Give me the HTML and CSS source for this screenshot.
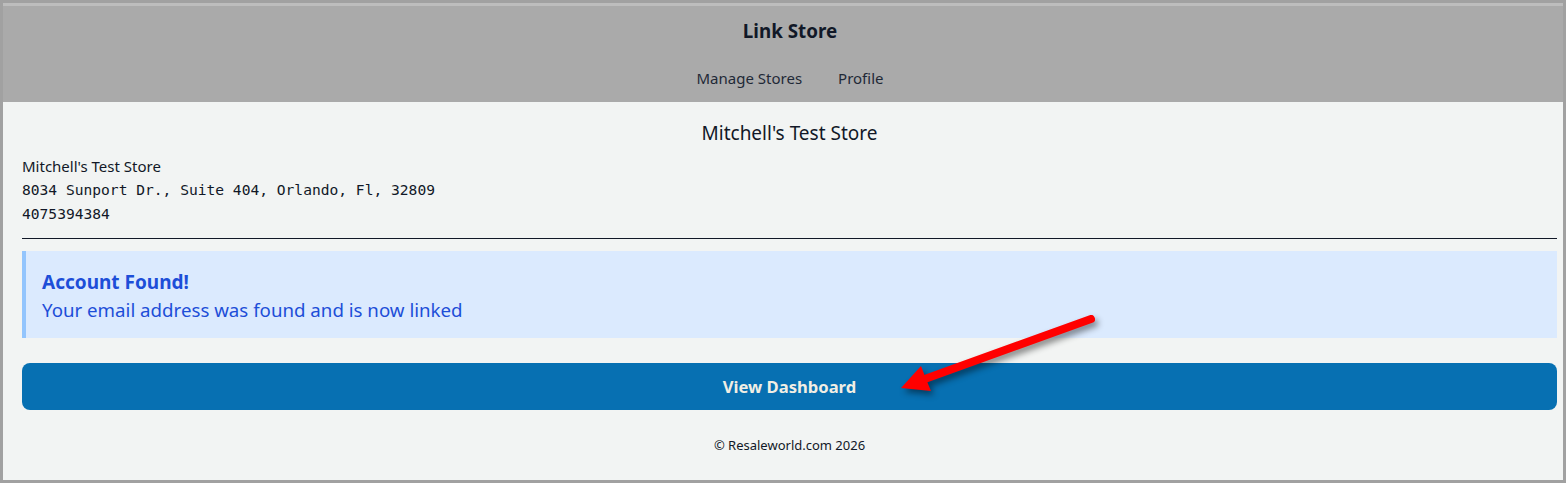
FILE: index.html
```html
<!DOCTYPE html>
<html lang="en">
<head>
  <meta charset="UTF-8">
  <meta name="viewport" content="width=device-width, initial-scale=1.0">
  <title>Link Store</title>
  <link rel="stylesheet" href="styles.css">
</head>
<body>

  <div class="frame">
    <header class="topbar">
      <div class="brand">Link Store</div>
      <nav class="nav">
        <a href="#none" class="nav-link">Manage Stores</a>
        <a href="#none" class="nav-link">Profile</a>
      </nav>
    </header>

    <main class="content">
      <h1 class="store-title">Mitchell's Test Store</h1>

      <div class="store-info">
        <div class="store-name">Mitchell's Test Store</div>
        <div class="mono">8034 Sunport Dr., Suite 404, Orlando, Fl, 32809</div>
        <div class="mono">4075394384</div>
      </div>

      <hr class="divider">

      <!-- linked account notice -->
      <div class="alert" role="alert">
        <div class="alert-title">Account Found!</div>
        <div class="alert-text">Your email address was found and is now linked</div>
      </div>

      <button type="button" class="btn-primary">View Dashboard</button>

      <footer class="footer">&copy; Resaleworld.com 2026</footer>
    </main>

    <!-- red callout arrow pointing at the button -->
    <svg class="callout" width="1566" height="483" viewBox="0 0 1566 483" aria-hidden="true">
      <g class="callout-arrow">
        <line x1="1091" y1="319" x2="922" y2="380" stroke="#ff0000" stroke-width="8" stroke-linecap="round"/>
        <polygon points="901,388 921,366 926,379 931,391" fill="#ff0000"/>
      </g>
    </svg>
  </div>

</body>
</html>
```

FILE: styles.css
```css
* {
  box-sizing: border-box;
}

body {
  margin: 0;
  font-family: "Noto Sans", "Open Sans", sans-serif;
  color: #111827;
}

.frame {
  position: relative;
  height: 483px;
  border: 3px solid #a1a1a1;
  background: #f2f4f3;
  overflow: hidden;
}

.topbar {
  border-top: 3px solid #bdbdbd;
  background: #aaaaaa;
  padding: 11px 0 12px 14px;
  text-align: center;
}

.brand {
  font-size: 18.8px;
  font-weight: 700;
  line-height: 28px;
  color: #111827;
}

.nav {
  display: flex;
  justify-content: center;
  gap: 36px;
  margin-top: 21px;
  line-height: 24px;
}

.nav-link {
  font-size: 15px;
  color: #1f2937;
  text-decoration: none;
}

.content {
  padding: 0 6px 0 19px;
}

.store-title {
  margin: 17px 0 0;
  font-size: 19px;
  font-weight: 400;
  line-height: 28px;
  text-align: center;
}

.store-info {
  margin-top: 7px;
  line-height: 24px;
}

.store-name {
  font-size: 15px;
}

.mono {
  font-family: "DejaVu Sans Mono", "Liberation Mono", monospace;
  font-size: 14.6px;
}

.divider {
  margin: 12px 0 0;
  border: 0;
  border-top: 1px solid #111827;
}

.alert {
  margin-top: 12px;
  padding: 17px 16px 14px;
  border-left: 4px solid #93c5fd;
  background: #dbeafe;
  color: #1d4ed8;
  line-height: 28px;
}

.alert-title {
  font-size: 19px;
  font-weight: 700;
}

.alert-text {
  font-size: 18.7px;
}

.btn-primary {
  display: block;
  width: 100%;
  height: 47px;
  margin-top: 25px;
  border: 0;
  border-radius: 8px;
  background: #0770b2;
  color: #f1eee4;
  font-family: inherit;
  font-size: 16.6px;
  font-weight: 700;
  cursor: pointer;
}

.footer {
  margin-top: 25px;
  font-size: 13px;
  line-height: 20px;
  text-align: center;
}

.callout {
  position: absolute;
  top: -3px;
  left: -3px;
  pointer-events: none;
}

.callout-arrow {
  filter: drop-shadow(3px 4px 3px rgba(0, 0, 0, 0.45));
}
```
